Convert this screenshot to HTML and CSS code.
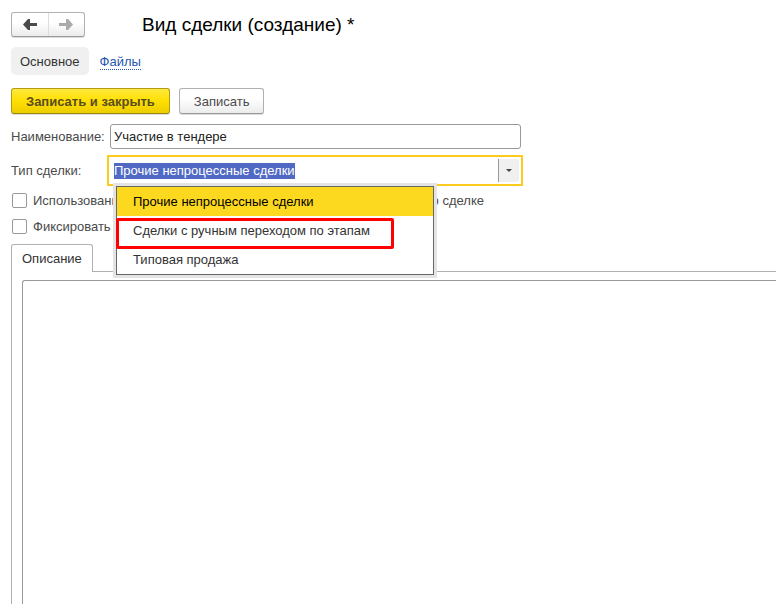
FILE: index.html
```html
<!DOCTYPE html>
<html lang="ru">
<head>
<meta charset="utf-8">
<title>Вид сделки (создание) *</title>
<link rel="stylesheet" href="styles.css">
</head>
<body>
<main class="form-window">
  <header class="header">
    <div class="history">
      <button type="button" class="history-button" aria-label="Назад">
        <svg width="14" height="11" viewBox="0 0 14 11" aria-hidden="true"><path d="M0 5.500 5 0H7V4H14V7H7V11H5Z"/></svg>
      </button>
      <button type="button" class="history-button forward" aria-label="Вперед">
        <svg width="14" height="11" viewBox="0 0 14 11" aria-hidden="true"><path d="M14 5.500 9 0H7V4H0V7H7V11H9Z"/></svg>
      </button>
    </div>
    <h1 class="title">Вид сделки (создание) *</h1>
  </header>

  <nav class="sections">
    <a class="section current" href="#main">Основное</a>
    <a class="section link" href="#files"><span>Файлы</span></a>
  </nav>

  <div class="commands">
    <button type="button" class="command primary">Записать и закрыть</button>
    <button type="button" class="command">Записать</button>
  </div>

  <div class="fields">
    <label for="name">Наименование:</label>
    <input class="text-field" id="name" type="text" value="Участие в тендере">

    <label for="deal-type">Тип сделки:</label>
    <div class="combo">
      <input class="combo-input" id="deal-type" type="text" role="combobox" aria-expanded="true" aria-controls="deal-types" value="Прочие непроцессные сделки">
      <button type="button" class="combo-button" aria-label="Выбрать из списка">
        <svg width="6" height="3" viewBox="0 0 6 3" aria-hidden="true"><path d="M0 0H6L3 3Z"/></svg>
      </button>
      <ul class="options" id="deal-types" role="listbox">
        <li class="option selected" role="option" aria-selected="true">Прочие непроцессные сделки</li>
        <li class="option marked" role="option" aria-selected="false">Сделки с ручным переходом по этапам</li>
        <li class="option" role="option" aria-selected="false">Типовая продажа</li>
      </ul>
    </div>
  </div>

  <div class="flags">
    <label class="flag"><input type="checkbox"><span class="flag-text"><span>Использовани</span><span>по сделке</span></span></label>
    <label class="flag"><input type="checkbox"><span class="flag-text">Фиксировать</span></label>
  </div>

  <div class="tabs" role="tablist">
    <button type="button" class="tab" id="tab-description" role="tab" aria-selected="true">Описание</button>
  </div>
  <section class="pane" role="tabpanel" aria-labelledby="tab-description">
    <textarea class="description" aria-labelledby="tab-description"></textarea>
  </section>
</main>
<script src="script.js"></script>
</body>
</html>
```
FILE: styles.css
```css
* {
  box-sizing: border-box;
}

body {
  margin: 0;
  background: #fff;
  color: #4a4a4a;
  font: 13px/16px "Liberation Sans", Arial, sans-serif;
}

button,
input,
textarea {
  font: inherit;
  color: inherit;
}

.form-window {
  display: flex;
  flex-direction: column;
  height: 100vh;
  padding: 12px 0 0 11px;
  overflow: hidden;
}

.header {
  display: flex;
  align-items: center;
  gap: 57px;
}

.history {
  display: flex;
  width: 74px;
  height: 25px;
  border: 1px solid #b0b0b0;
  border-bottom-color: #999;
  border-radius: 3px;
  background: linear-gradient(#fff 40%, #ececec);
  box-shadow: 0 1px 0 #ddd;
}

.history-button {
  display: grid;
  flex: 1;
  place-items: center;
  padding: 0;
  border: 0;
  background: none;
  fill: #4a4a4a;
}

.forward {
  border-left: 1px solid #ddd;
  fill: #aaa;
}

.title {
  margin: 0;
  color: #000;
  font-size: 19px;
  font-weight: 400;
  line-height: 25px;
}

.sections {
  display: flex;
  gap: 11px;
  margin-top: 10px;
}

.section {
  padding: 7px 0 5px;
  color: #333;
  text-decoration: none;
}

.current {
  padding: 7px 9px 5px;
  border-radius: 5px;
  background: #f0f0f0;
}

.link span {
  border-bottom: 1px dotted #2457b0;
  color: #2457b0;
}

.commands {
  display: flex;
  gap: 9px;
  margin-top: 13px;
}

.command {
  height: 26px;
  padding: 1px 14px 0;
  border: 1px solid #b0b0b0;
  border-bottom-color: #999;
  border-radius: 3px;
  background: linear-gradient(#fff 40%, #ececec);
  box-shadow: 0 1px 0 #ddd;
}

.primary {
  border-color: #b09a1a;
  border-bottom-color: #99860a;
  background: linear-gradient(#ffe93d, #ffe000 50%, #eccd00);
  color: #5a4d20;
  font-weight: 700;
}

.fields {
  display: grid;
  grid-template-columns: 99px minmax(0, 411px);
  align-items: center;
  row-gap: 6px;
  margin-top: 10px;
}

.text-field {
  width: 100%;
  height: 25px;
  padding: 0 3px;
  border: 1px solid #999;
  border-radius: 3px;
  background: #fff;
  color: #222;
}

.combo {
  position: relative;
  display: flex;
  height: 31px;
  margin: 0 -2px 0 -3px;
  padding: 2px;
  border: 2px solid #fbcb1e;
}

.combo-input {
  flex: 1;
  min-width: 0;
  padding: 0 3px;
  border: 0;
  outline: 0;
  background: #fff;
}

.combo-input::selection {
  background: #5069c4;
  color: #fff;
}

.combo-button {
  display: grid;
  width: 21px;
  place-items: center;
  padding: 0;
  border: 0;
  border-left: 1px solid #999;
  border-radius: 0 3px 3px 0;
  background: #f0f0f0;
  fill: #444;
}

.options {
  position: absolute;
  top: 29px;
  left: 7px;
  z-index: 1;
  width: 318px;
  margin: 0;
  padding: 0;
  border: 1px solid #666;
  background: #fff;
  box-shadow: 0 0 0 3px #e4e4e4;
  color: #333;
  list-style: none;
}

.option {
  position: relative;
  padding: 7px 16px 6px;
}

.selected {
  background: #fcd91f;
  color: #000;
}

.marked::after {
  position: absolute;
  inset: 2px 39px -4px -1px;
  border: 3px solid #f00;
  border-radius: 2px;
  content: "";
}

.flags {
  display: flex;
  flex-direction: column;
  gap: 9px;
  margin-top: 6px;
}

.flag {
  display: flex;
  align-items: center;
  gap: 6px;
}

.flag input {
  width: 15px;
  height: 15px;
  margin: 0 0 0 1px;
  border: 1px solid #999;
  border-radius: 2px;
  background: #fff;
  appearance: none;
}

.flag-text {
  display: flex;
  flex: 0 1 451px;
  justify-content: space-between;
  padding-top: 1px;
}

.tabs {
  display: flex;
  margin-top: 9px;
}

.tab {
  z-index: 0;
  height: 28px;
  margin-bottom: -1px;
  padding: 0 10px;
  border: 1px solid #b0b0b0;
  border-bottom: 0;
  border-radius: 3px 3px 0 0;
  background: #fff;
  color: #333;
}

.pane {
  display: flex;
  flex: 1;
  padding: 8px 0 0 10px;
  border: solid #b0b0b0;
  border-width: 1px 0 0 1px;
}

.description {
  flex: 1;
  padding: 4px;
  border: solid #999;
  border-width: 1px 0 0 1px;
  border-radius: 3px 0 0 0;
  outline: 0;
  background: #fff;
  resize: none;
}
```
FILE: script.js
```js
const dealType = document.getElementById("deal-type");
dealType.focus();
dealType.select();
```
